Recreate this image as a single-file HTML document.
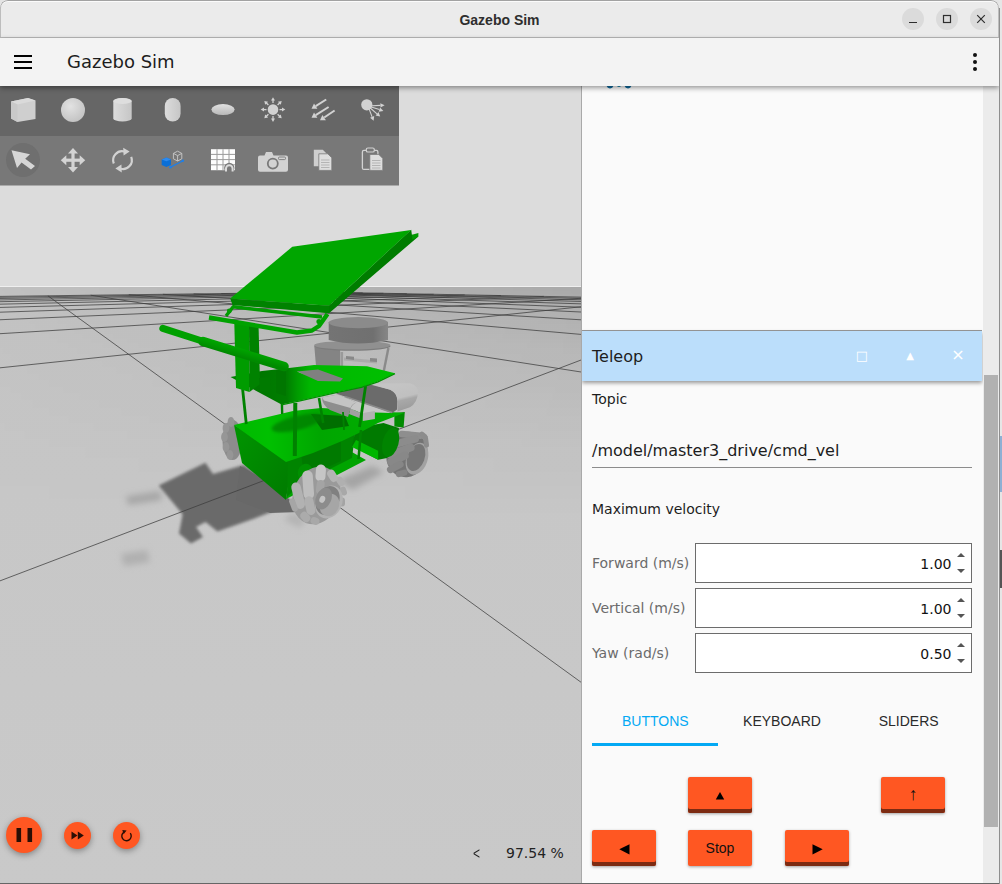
<!DOCTYPE html>
<html>
<head>
<meta charset="utf-8">
<title>Gazebo Sim</title>
<style>
html,body{margin:0;padding:0;}
body{width:1002px;height:884px;overflow:hidden;background:#e4e4e4;position:relative;font-family:"DejaVu Sans","Liberation Sans",sans-serif;color:#1d1d1d;}
.abs{position:absolute;}
#win{position:absolute;left:0;top:0;width:999px;height:884px;background:#fafafa;overflow:hidden;border-radius:8px 8px 0 0;}
#titlebar{position:absolute;left:0;top:0;width:999px;height:37px;background:#ebebeb;border-bottom:1px solid #b9b9b9;border-radius:8px 8px 0 0;box-shadow:inset 0 1px 0 #a2a2a2,inset 1px 0 0 #bdbdbd,inset -1px 0 0 #bdbdbd,inset 0 2px 0 #fbfbfb;}
#titlebar .t{position:absolute;left:0;width:999px;top:11.5px;text-align:center;font-family:"Liberation Sans","DejaVu Sans",sans-serif;font-weight:bold;font-size:14px;line-height:16px;color:#2e2e2e;}
.wb{position:absolute;top:8px;width:22px;height:22px;border-radius:11px;background:#dbdbdb;}
#header{position:absolute;left:0;top:38px;width:999px;height:48px;background:#f3f3f3;box-shadow:0 2px 5px rgba(0,0,0,.4);z-index:5;}
#header .ttl{position:absolute;left:67px;top:12px;font-size:18px;line-height:24px;color:#1d1d1d;white-space:nowrap;}
#view{position:absolute;left:0;top:86px;width:581px;height:797px;background:#c9c9c9;overflow:hidden;}
#split{position:absolute;left:581px;top:86px;width:1px;height:797px;background:#a9a9a9;}
#panel{position:absolute;left:582px;top:86px;width:401px;height:797px;background:#fafafa;overflow:hidden;}
#sbar{position:absolute;left:983px;top:86px;width:16px;height:797px;background:#ebebeb;}
#sbar .th{position:absolute;left:1px;top:289px;width:14px;height:452px;background:#b1b1b1;}

.lbl{font-size:14px;line-height:18px;color:#1d1d1d;white-space:nowrap;}
.lbl.g{color:#6b6b6b;}
.spin{left:113px;width:275px;height:38px;border:1px solid #6c6c6c;background:#fff;}
.spin span{position:absolute;right:19.5px;top:11px;font-size:14px;line-height:18px;color:#111;}
.spin i{position:absolute;left:261px;width:0;height:0;border-left:4px solid transparent;border-right:4px solid transparent;}
.spin i.u{top:9px;border-bottom:4.5px solid #555;}
.spin i.d{top:25px;border-top:4.5px solid #555;}
.tab{top:610px;width:126.67px;height:50px;text-align:center;font-family:"Liberation Sans","DejaVu Sans",sans-serif;font-size:14px;line-height:50px;color:#2a2a2a;white-space:nowrap;}
.btn{width:64px;height:36px;border-radius:2px;background:#ff5722;box-shadow:0 1px 3px rgba(0,0,0,.35);overflow:hidden;text-align:center;font-family:"Liberation Sans","DejaVu Sans",sans-serif;font-size:14px;line-height:36px;color:#111;}
.btn.k{box-shadow:inset 0 -4px 0 #7c2b12,0 1px 3px rgba(0,0,0,.35);}
.btn svg{display:block}
.fab{border-radius:50%;background:#ff5722;box-shadow:0 2px 6px rgba(0,0,0,.35);}
.fab svg{display:block}
</style>
</head>
<body>
<div id="rstrip" class="abs" style="left:999px;top:0;width:3px;height:884px;background:#e6e6e6"><div class="abs" style="left:0;top:8px;width:1px;height:876px;background:#8e8e8e"></div><div class="abs" style="left:1px;top:436px;width:2px;height:56px;background:#8fb0d4"></div><div class="abs" style="left:1px;top:550px;width:2px;height:38px;background:#555"></div></div>
<div id="win">
  <div id="titlebar">
    <div class="t">Gazebo Sim</div>
    <div class="wb" style="left:902px"><svg width="22" height="22" viewBox="0 0 22 22"><path d="M7 14.5h8" stroke="#2e2e2e" stroke-width="1.2" fill="none"/></svg></div>
    <div class="wb" style="left:936px"><svg width="22" height="22" viewBox="0 0 22 22"><rect x="7.5" y="7.5" width="7" height="7" stroke="#2e2e2e" stroke-width="1.2" fill="none"/></svg></div>
    <div class="wb" style="left:970px"><svg width="22" height="22" viewBox="0 0 22 22"><path d="M7.2 7.2l7.6 7.6M14.8 7.2l-7.6 7.6" stroke="#2e2e2e" stroke-width="1.2" fill="none"/></svg></div>
  </div>
  <div id="header">
    <svg class="abs" style="left:14px;top:17px" width="18" height="14" viewBox="0 0 18 14"><path d="M0 1h18M0 7h18M0 13h18" stroke="#000" stroke-width="2"/></svg>
    <div class="ttl">Gazebo Sim</div>
    <svg class="abs" style="left:971px;top:12px" width="8" height="24" viewBox="0 0 8 24"><circle cx="4" cy="5" r="2" fill="#111"/><circle cx="4" cy="12" r="2" fill="#111"/><circle cx="4" cy="19" r="2" fill="#111"/></svg>
  </div>
  <div id="view">
<!--SCENE--><svg class="abs" style="left:0;top:0" width="581" height="797" viewBox="0 86 581 797">
<defs><linearGradient id="gnd" x1="0" y1="0" x2="0" y2="1"><stop offset="0" stop-color="#c6c6c6"/><stop offset="1" stop-color="#c9c9c9"/></linearGradient><linearGradient id="dkv" gradientUnits="userSpaceOnUse" x1="0" y1="287" x2="0" y2="520"><stop offset="0" stop-color="#000" stop-opacity=".145"/><stop offset=".14" stop-color="#000" stop-opacity=".10"/><stop offset=".27" stop-color="#000" stop-opacity=".075"/><stop offset=".485" stop-color="#000" stop-opacity=".045"/><stop offset=".7" stop-color="#000" stop-opacity=".02"/><stop offset="1" stop-color="#000" stop-opacity="0"/></linearGradient><linearGradient id="mhg" gradientUnits="userSpaceOnUse" x1="0" y1="0" x2="581" y2="0"><stop offset="0" stop-color="#fff" stop-opacity=".18"/><stop offset="1" stop-color="#fff" stop-opacity="1"/></linearGradient><mask id="mh" maskUnits="userSpaceOnUse" x="0" y="86" width="581" height="800"><rect x="0" y="86" width="581" height="800" fill="url(#mhg)"/></mask><filter id="bl" x="-20%" y="-20%" width="140%" height="140%"><feGaussianBlur stdDeviation="3"/></filter><filter id="bl2" x="-20%" y="-20%" width="140%" height="140%"><feGaussianBlur stdDeviation="1.8"/></filter><filter id="bl3" x="-30%" y="-60%" width="160%" height="220%"><feGaussianBlur stdDeviation="3"/></filter>
<linearGradient id="gp1" gradientUnits="userSpaceOnUse" x1="234" y1="430" x2="404" y2="420"><stop offset="0" stop-color="#00b800"/><stop offset=".2" stop-color="#00c000"/><stop offset=".5" stop-color="#00a600"/><stop offset="1" stop-color="#00b000"/></linearGradient>
<linearGradient id="gp2" gradientUnits="userSpaceOnUse" x1="230" y1="380" x2="395" y2="380"><stop offset="0" stop-color="#008200"/><stop offset=".18" stop-color="#007600"/><stop offset=".345" stop-color="#007e00"/><stop offset=".41" stop-color="#009c00"/><stop offset=".49" stop-color="#00b800"/><stop offset="1" stop-color="#00c000"/></linearGradient>
<linearGradient id="gside" gradientUnits="userSpaceOnUse" x1="236" y1="440" x2="290" y2="480"><stop offset="0" stop-color="#009200"/><stop offset="1" stop-color="#007e00"/></linearGradient>
<linearGradient id="gl" x1="0" y1="0" x2="1" y2="0"><stop offset="0" stop-color="#747474"/><stop offset=".75" stop-color="#707070"/><stop offset=".9" stop-color="#7e7e7e"/><stop offset="1" stop-color="#868686"/></linearGradient>
<linearGradient id="gcap" gradientUnits="userSpaceOnUse" x1="402" y1="384" x2="408" y2="409"><stop offset="0" stop-color="#c4c4c4"/><stop offset=".5" stop-color="#c0c0c0"/><stop offset=".62" stop-color="#a8a8a8"/><stop offset="1" stop-color="#9c9c9c"/></linearGradient>
<linearGradient id="gb" gradientUnits="userSpaceOnUse" x1="240" y1="345" x2="237" y2="356"><stop offset="0" stop-color="#00ae00"/><stop offset="1" stop-color="#008a00"/></linearGradient></defs>
<rect x="0" y="86" width="581" height="200" fill="#dcdcdc"/>
<rect x="0" y="286" width="581" height="1" fill="#efefef"/>
<rect x="0" y="287" width="581" height="600" fill="url(#gnd)"/>
<rect x="0" y="287" width="581" height="240" fill="url(#dkv)" mask="url(#mh)"/>
<g filter="url(#bl3)">
<polygon points="126.0,496.5 160.0,491.0 162.0,500.0 128.0,505.0" fill="#a6a6a6" />
<polygon points="121.0,554.0 147.0,550.0 150.0,562.0 124.0,566.0" fill="#b0b0b0" />
<polygon points="338.0,480.0 372.0,466.0 384.0,472.0 352.0,490.0" fill="#a4a4a4" />
<polygon points="292.0,512.0 306.0,520.0 300.0,528.0 284.0,520.0" fill="#b4b4b4" />
</g>
<g filter="url(#bl2)">
<polygon points="158.7,485.5 205.4,462.8 213.0,474.0 243.7,465.0 262.0,478.0 290.0,500.0 289.0,505.0 253.0,519.0 217.4,531.5 205.5,522.0 196.0,527.0 203.0,537.0 191.0,543.5 179.0,533.4 182.6,514.3" fill="#6a6a6a" />
</g>
<polygon points="240.0,466.0 262.0,478.0 290.0,500.0 300.0,512.0 270.0,513.0 236.0,500.0" fill="#686868" />

<path d="M-44701.0 1205.7L-1174.9 311.4M-108188.7 2765.1L-894.1 307.8M-59369.8 1823.1L-684.0 305.1M-37438.2 1400.0L-520.9 303.0M-24977.5 1159.6L-390.6 301.4M-51260.3 2455.9L-284.1 300.0M-26282.5 1698.4L-195.5 298.9M-14233.7 1333.0L-120.6 297.9M-31795.4 3974.8L-56.4 297.1M-6957.6 2215.4L-0.8 296.4M1836.6 1592.4L47.9 295.8M6337.1 1273.6L90.7 295.2M34692.8 3329.6L128.8 294.7M28500.2 2022.8L162.9 294.3M26028.3 1501.2L193.6 293.9M24698.5 1220.6L221.3 293.6M81381.1 2876.5L246.5 293.2M57521.6 1865.2L269.5 292.9M47061.8 1421.9L290.6 292.7M41188.4 1173.0L310.0 292.4M115967.8 2540.8L327.9 292.2M101839.7 2503.4L6546.8 413.1M133675.0 3720.6L3022.4 344.6M40132.0 1523.7L1973.3 324.2M39213.1 1828.8L1469.6 314.4M37692.7 2333.6L1173.7 308.6M34692.8 3329.6L979.0 304.9M5808.9 1469.0L841.1 302.2M-3061.8 1744.6L738.4 300.2M-17326.0 2187.9L658.9 298.6M-44051.4 3018.5L595.6 297.4M-25605.5 1418.9L543.9 296.4M-40962.0 1669.2L500.9 295.6M-65035.4 2061.6L464.7 294.9M-108188.7 2765.1L433.7 294.3M-16454.8 625.3L406.8 293.7M-3931.7 368.0L383.4 293.3M-2219.5 332.8L362.7 292.9M-1539.7 318.9L344.3 292.5M-1174.9 311.4L327.9 292.2" stroke="#3c3c3c" stroke-width="1" stroke-opacity=".75" fill="none"/>

<ellipse cx="232.5" cy="440" rx="10" ry="20" fill="#8c8c8c" />
<ellipse cx="226" cy="428" rx="3.4" ry="5" fill="#969696" />
<ellipse cx="224.5" cy="437" rx="3.4" ry="5" fill="#969696" />
<ellipse cx="226" cy="447" rx="3.4" ry="5" fill="#969696" />
<ellipse cx="230" cy="455" rx="3.4" ry="5" fill="#969696" />
<ellipse cx="231" cy="422" rx="3.4" ry="5" fill="#969696" />
<ellipse cx="407" cy="454.5" rx="20.5" ry="23" fill="#747474" transform="rotate(20 407 454.5)" />
<ellipse cx="417" cy="458.8" rx="10.5" ry="16.5" fill="#a2a2a2" transform="rotate(20 417 458.8)" />
<ellipse cx="416" cy="457.5" rx="8.6" ry="14" fill="#767676" transform="rotate(20 416 457.5)" />
<rect x="407.9" y="422.3" width="6.5" height="25" rx="3.2" fill="#8e8e8e" transform="rotate(95 411.1 434.8)"/>
<rect x="401.1" y="427.1" width="7.5" height="29" rx="3.8" fill="#8c8c8c" transform="rotate(75 404.8 441.6)"/>
<rect x="396.7" y="436.6" width="8" height="29" rx="4.0" fill="#8a8a8a" transform="rotate(70 400.7 451.1)"/>
<rect x="394.0" y="447.3" width="8" height="23" rx="4.0" fill="#888" transform="rotate(65 398 458.8)"/>
<rect x="391.8" y="458.0" width="7" height="18" rx="3.5" fill="#868686" transform="rotate(62 395.3 467)"/>
<rect x="398.6" y="467.3" width="6" height="12" rx="3.0" fill="#848484" transform="rotate(75 401.6 473.3)"/>
<rect x="423.5" y="435.6" width="5" height="12" rx="2.5" fill="#8c8c8c" transform="rotate(-8 426 441.6)"/>
<rect x="421.0" y="431.0" width="5" height="9" rx="2.5" fill="#8c8c8c" transform="rotate(-50 423.5 435.5)"/>
<polygon points="286.0,499.0 291.0,465.0 343.0,447.0 366.0,460.0 337.0,475.0 300.0,492.0" fill="#00a400" />
<polygon points="234.0,425.0 242.0,463.0 286.0,500.0 292.0,460.0" fill="url(#gside)" />
<polygon points="288.0,456.0 355.0,434.0 352.0,458.0 300.0,484.0 287.0,497.0" fill="#008400" />
<polygon points="301.0,452.0 341.0,438.0 341.0,461.0 304.0,478.0" fill="#007a00" />
<ellipse cx="305" cy="472" rx="7" ry="8.5" fill="#009000" transform="rotate(20 305 472)" />
<polygon points="356.0,428.0 383.5,423.0 399.0,428.0 397.0,440.0 387.1,458.0 378.1,459.8 352.0,446.0" fill="#007a00" />
<ellipse cx="390.6" cy="442.5" rx="8" ry="15" fill="#008400" transform="rotate(15 390.6 442.5)" />
<polygon points="356.0,440.0 378.1,450.7 378.1,459.8 352.0,447.0" fill="#00b600" />
<polygon points="394.4,413.0 404.8,412.0 403.6,427.5 394.4,426.5" fill="#008a00" />
<polygon points="234.0,425.0 293.0,411.0 321.0,408.0 376.0,411.0 404.0,413.0 378.0,423.0 361.0,432.0 342.0,441.0 313.0,453.0 286.0,462.0" fill="url(#gp1)" />
<polygon points="311.0,414.0 345.0,416.0 349.0,426.0 322.0,430.0" fill="#006e00" />
<ellipse cx="297" cy="423" rx="26" ry="7" fill="#007c00" transform="rotate(-14 297 423)" opacity=".75" filter="url(#bl2)"/>
<polygon points="322.0,397.5 336.5,393.6 392.0,413.0 375.0,412.5 362.0,413.5 350.5,408.5" fill="#c6c6c6" />
<polygon points="350.5,408.5 362.0,413.5 362.0,419.0 349.0,414.0" fill="#a0a0a0" />
<path d="M322 397.5 L338 394.5 L356.5 402.5 Q352 404 350.5 409 L348 417 L330 410 Q322 405 322 397.5Z" fill="#8e8e8e"/>
<path d="M322 397.5 L338 394.5 L356.5 402.5 Q352 403.5 350.5 408 L324 400.5Z" fill="#c4c4c4"/>
<polygon points="362.8,413.0 374.9,411.0 374.9,419.0 362.8,421.0" fill="#b2b2b2" />
<path d="M336 393.6 L345 390.5 L368 384 L390.3 389.8 Q397.4 393 397.4 401 L397 409.5 L392.4 413 Z" fill="#6b6b6b"/>
<path d="M345 396.5 L392 412.6" stroke="#8a8a8a" stroke-width="1.6" fill="none"/>
<path d="M369 383.6 L410 383.2 Q418.5 385.5 417.9 393 Q417.5 402.5 410 407.3 L397.5 411.6 L397.4 401 Q397.4 393 390.3 389.8 Z" fill="url(#gcap)"/>
<polygon points="296.0,370.0 320.0,368.0 345.0,378.0 341.0,383.0 316.0,382.0" fill="#808080" />
<polygon points="314.4,347.0 340.1,350.0 340.1,368.0 316.0,366.0" fill="#848484" />
<line x1="341.8" y1="352" x2="341.8" y2="378" stroke="#9a9a9a" stroke-width="2.6" />
<line x1="388.4" y1="348" x2="383.8" y2="371" stroke="#8a8a8a" stroke-width="2.4" />
<polygon points="344.0,357.5 377.0,360.5 377.0,363.5 344.0,360.5" fill="#aaaaaa" />
<polygon points="346.0,356.0 354.0,356.8 354.0,360.0 346.0,359.0" fill="#888" />
<polygon points="370.0,358.0 377.0,358.6 377.0,362.0 370.0,361.4" fill="#888" />
<ellipse cx="352.3" cy="346.2" rx="38.2" ry="4.6" fill="#7c7c7c" />
<ellipse cx="352.3" cy="345.2" rx="38.2" ry="4.4" fill="#909090" />
<path d="M328.7 322 L328.7 340 Q357 347 388 340 L388 322 Z" fill="url(#gl)"/>
<ellipse cx="358.3" cy="322.6" rx="29.7" ry="5.6" fill="#8b8b8b" />
<line x1="242.6" y1="389" x2="246.3" y2="424" stroke="#008200" stroke-width="2.8" />
<line x1="295.3" y1="403" x2="294.8" y2="456" stroke="#008200" stroke-width="4" />
<line x1="281.9" y1="404" x2="282.2" y2="414" stroke="#008200" stroke-width="2.4" />
<line x1="319" y1="398" x2="323.2" y2="423" stroke="#008200" stroke-width="2.6" />
<line x1="365.6" y1="386" x2="359.5" y2="427" stroke="#008200" stroke-width="2.8" />
<line x1="361" y1="430" x2="358.5" y2="459" stroke="#008200" stroke-width="2.6" />
<line x1="343" y1="412" x2="344" y2="430" stroke="#008200" stroke-width="1.8" />
<polygon points="296.0,370.0 320.0,368.0 345.0,378.0 341.0,383.0 316.0,382.0" fill="#808080" />
<path d="M230.5 377 L262 371 L289 368 L314 365 L367 366.3 L395 373.3 L378 381.5 L361.5 387 L335 392.5 L300 400.5 L281.5 404.5 Z M297 371.5 L318 369.5 L343 378.5 L340 381.5 L318 381 Z" fill="url(#gp2)" fill-rule="evenodd"/>
<polyline points="281.5,404.8 300.0,400.9 335.0,392.9 361.5,387.4 378.0,381.9 395.0,373.6" fill="none" stroke="#009000" stroke-width="1.2" />
<polygon points="234.3,323.0 249.0,325.0 249.5,392.0 236.0,388.0" fill="#009c00" />
<polygon points="249.0,325.0 258.5,324.0 260.0,384.0 249.5,392.0" fill="#008200" />
<polygon points="259.0,378.0 270.0,377.0 270.5,390.0 260.0,392.0" fill="#007a00" />
<polygon points="276.0,370.0 286.0,371.0 286.0,396.0 276.0,393.0" fill="#007600" />
<line x1="162.8" y1="328.4" x2="202" y2="341" stroke="#00a000" stroke-width="7" stroke-linecap="round"/>
<line x1="203" y1="341.5" x2="284" y2="366.5" stroke="url(#gb)" stroke-width="9.5" stroke-linecap="round"/>
<polyline points="209.0,317.5 297.0,332.5 312.0,330.5 319.0,326.0 327.5,314.0" fill="none" stroke="#00a200" stroke-width="4.4" stroke-linejoin="round"/>
<polyline points="226.0,316.0 233.2,306.8 322.0,317.0" fill="none" stroke="#009a00" stroke-width="3.4" stroke-linejoin="round"/>
<ellipse cx="229.3" cy="311" rx="2.4" ry="2.4" fill="#00a000" />
<ellipse cx="319" cy="321.5" rx="2.6" ry="2.6" fill="#00a000" />
<polygon points="230.2,298.5 329.0,305.7 329.0,313.3 232.5,305.0" fill="#008200" />
<polygon points="411.2,229.7 411.9,234.8 418.4,236.4 329.0,313.3 329.0,305.7" fill="#007c00" />
<polygon points="411.9,234.8 418.4,233.0 418.4,236.4 412.5,239.8" fill="#009a00" />
<polygon points="292.3,246.8 411.2,229.9 329.0,305.7 230.2,298.5" fill="#00a600" />
<ellipse cx="316.5" cy="495.5" rx="23.5" ry="29.5" fill="#9a9a9a" transform="rotate(20 316.5 495.5)" />
<rect x="337.1" y="476.5" width="7" height="10" rx="3.5" fill="#b0b0b0" transform="rotate(-35 340.6 481.5)"/>
<rect x="340.5" y="486.5" width="6" height="9" rx="3.0" fill="#a8a8a8" transform="rotate(-20 343.5 491)"/>
<rect x="339.0" y="497.5" width="6" height="9" rx="3.0" fill="#a4a4a4" transform="rotate(0 342 502)"/>
<rect x="328.5" y="469.3" width="8" height="13" rx="4.0" fill="#b4b4b4" transform="rotate(-32 332.5 475.8)"/>
<rect x="315.7" y="464.6" width="10" height="17" rx="5.0" fill="#c6c6c6" transform="rotate(4 320.7 473.1)"/>
<rect x="316.3" y="480.0" width="8" height="14" rx="4.0" fill="#a4a4a4" transform="rotate(8 320.3 487)"/>
<rect x="302.9" y="470.4" width="10.5" height="29" rx="5.2" fill="#bebebe" transform="rotate(-4 308.1 484.9)"/>
<rect x="293.4" y="482.2" width="9.5" height="27" rx="4.8" fill="#b2b2b2" transform="rotate(-14 298.1 495.7)"/>
<rect x="305.4" y="496.2" width="9" height="19" rx="4.5" fill="#b0b0b0" transform="rotate(-12 309.9 505.7)"/>
<rect x="301.3" y="511.5" width="8" height="11" rx="4.0" fill="#ababab" transform="rotate(-40 305.3 517)"/>
<rect x="290.5" y="498.0" width="6" height="14" rx="3.0" fill="#a6a6a6" transform="rotate(-20 293.5 505)"/>
<rect x="311.5" y="516.5" width="7" height="9" rx="3.5" fill="#a8a8a8" transform="rotate(-70 315 521)"/>
<ellipse cx="328.9" cy="502" rx="13.2" ry="17" fill="#b2b2b2" transform="rotate(24 328.9 502)" />
<ellipse cx="327.6" cy="500.5" rx="11.4" ry="15" fill="#808080" transform="rotate(24 327.6 500.5)" />
<ellipse cx="329.5" cy="505" rx="9.5" ry="11.5" fill="#a6a6a6" transform="rotate(24 329.5 505)" />
<ellipse cx="323.6" cy="498.6" rx="7.6" ry="11.4" fill="#8c8c8c" transform="rotate(24 323.6 498.6)" />
<ellipse cx="322.3" cy="499.3" rx="2.8" ry="3.6" fill="#c4c4c4" transform="rotate(24 322.3 499.3)" />
</svg><svg class="abs" style="left:0;top:0" width="399" height="100" viewBox="0 86 399 100">
<defs><radialGradient id="sph" cx=".4" cy=".35" r=".7"><stop offset="0" stop-color="#e2e2e2"/><stop offset="1" stop-color="#c2c2c2"/></radialGradient><linearGradient id="cyl" x1="0" y1="0" x2="1" y2="0"><stop offset="0" stop-color="#dcdcdc"/><stop offset="1" stop-color="#c6c6c6"/></linearGradient><linearGradient id="elp" x1="0" y1="0" x2="0" y2="1"><stop offset="0" stop-color="#e0e0e0"/><stop offset="1" stop-color="#b8b8b8"/></linearGradient></defs>
<rect x="0" y="86" width="399" height="50" fill="#666"/><rect x="0" y="136" width="399" height="49.5" fill="#787878"/>
<polygon points="11,101.5 28,98 35.5,100.5 35.5,119 17.5,122 11,118.5" fill="#cfcfcf"/><polygon points="11,101.5 28,98 35.5,100.5 17.5,104.5" fill="#dadada"/><polygon points="11,101.5 17.5,104.5 17.5,122 11,118.5" fill="#c9c9c9"/>
<circle cx="73" cy="110" r="12" fill="url(#sph)"/>
<path d="M113.3 101 A9.2 3 0 0 1 131.7 101 L131.7 118.5 A9.2 3 0 0 1 113.3 118.5Z" fill="url(#cyl)"/><ellipse cx="122.5" cy="101" rx="9.2" ry="3" fill="#dedede"/>
<rect x="164.8" y="98" width="15.8" height="23.5" rx="7.9" fill="url(#cyl)"/>
<ellipse cx="223" cy="109.6" rx="11.6" ry="5.5" fill="url(#elp)"/>
<g stroke="#d2d2d2" stroke-width="1.3" fill="#d2d2d2"><circle cx="273" cy="109.6" r="5.3" stroke="none"/>
<line x1="279.5" y1="109.6" x2="283.0" y2="109.6"/>
<polygon stroke="none" points="285.3,109.6 282.0,111.6 282.0,107.6"/>
<line x1="277.6" y1="114.2" x2="280.1" y2="116.7"/>
<polygon stroke="none" points="281.7,118.3 277.9,117.4 280.8,114.5"/>
<line x1="273.0" y1="116.1" x2="273.0" y2="119.6"/>
<polygon stroke="none" points="273.0,121.9 271.0,118.6 275.0,118.6"/>
<line x1="268.4" y1="114.2" x2="265.9" y2="116.7"/>
<polygon stroke="none" points="264.3,118.3 265.2,114.5 268.1,117.4"/>
<line x1="266.5" y1="109.6" x2="263.0" y2="109.6"/>
<polygon stroke="none" points="260.7,109.6 264.0,107.6 264.0,111.6"/>
<line x1="268.4" y1="105.0" x2="265.9" y2="102.5"/>
<polygon stroke="none" points="264.3,100.9 268.1,101.8 265.2,104.7"/>
<line x1="273.0" y1="103.1" x2="273.0" y2="99.6"/>
<polygon stroke="none" points="273.0,97.3 275.0,100.6 271.0,100.6"/>
<line x1="277.6" y1="105.0" x2="280.1" y2="102.5"/>
<polygon stroke="none" points="281.7,100.9 280.8,104.7 277.9,101.8"/>
</g>
<line x1="326.2" y1="99.5" x2="315.7" y2="106.1" stroke="#d2d2d2" stroke-width="2"/><polygon fill="#d2d2d2" points="311.5,108.8 314.0,103.4 317.4,108.8"/>
<line x1="328.6" y1="107.0" x2="315.7" y2="115.1" stroke="#d2d2d2" stroke-width="2"/><polygon fill="#d2d2d2" points="311.5,117.8 314.0,112.4 317.4,117.8"/>
<line x1="334.6" y1="110.5" x2="324.2" y2="117.5" stroke="#d2d2d2" stroke-width="2"/><polygon fill="#d2d2d2" points="320.0,120.3 322.4,114.9 325.9,120.2"/>
<circle cx="366.8" cy="104.8" r="5.6" fill="#d2d2d2"/>
<line x1="368.0" y1="106.0" x2="380.4" y2="105.4" stroke="#d2d2d2" stroke-width="1.1"/><polygon fill="#d2d2d2" points="384.6,105.2 380.5,107.6 380.3,103.2"/>
<line x1="368.0" y1="106.0" x2="379.4" y2="109.6" stroke="#d2d2d2" stroke-width="1.1"/><polygon fill="#d2d2d2" points="383.4,110.9 378.7,111.7 380.1,107.5"/>
<line x1="368.0" y1="106.0" x2="377.0" y2="113.8" stroke="#d2d2d2" stroke-width="1.1"/><polygon fill="#d2d2d2" points="380.2,116.5 375.6,115.4 378.5,112.1"/>
<line x1="368.0" y1="106.0" x2="372.1" y2="116.9" stroke="#d2d2d2" stroke-width="1.1"/><polygon fill="#d2d2d2" points="373.6,120.8 370.1,117.7 374.2,116.1"/>
<circle cx="23" cy="160" r="17" fill="#6f6f6f"/>
<polygon points="11.5,150.2 30,154.3 25.2,158.8 35,166 31,169.4 21.6,162.4 17,168" fill="#d6d6d6"/>
<g fill="#d4d4d4"><rect x="71.4" y="151" width="3.2" height="18.5"/><rect x="63.5" y="158.6" width="19" height="3.2"/><polygon points="73,148 78,153.5 68,153.5"/><polygon points="73,172.4 78,167 68,167"/><polygon points="60.8,160.2 66.3,155.2 66.3,165.2"/><polygon points="85.2,160.2 79.7,155.2 79.7,165.2"/></g>
<g fill="none" stroke="#d2d2d2" stroke-width="2.2"><path d="M113.8 163.5 A9 9 0 0 1 124.5 151.5"/><path d="M131.2 156.8 A9 9 0 0 1 120.5 168.8"/></g><polygon fill="#d2d2d2" points="123.2,147.8 129.6,151.6 123.6,155.6"/><polygon fill="#d2d2d2" points="121.8,172.4 115.4,168.6 121.4,164.6"/>
<polygon points="161.7,159.5 166.5,157.6 171,159.4 171,165 166.3,167 161.7,165" fill="#0b6fd6"/><polygon points="161.7,159.5 166.5,157.6 171,159.4 166.3,161.3" fill="#2b8af0"/>
<g fill="none" stroke="#c9c9c9" stroke-width=".9"><polygon points="173.4,153.4 177.6,151.2 181.8,153.4 181.8,158.8 177.6,161 173.4,158.8"/><path d="M173.4 153.4L177.6 155.6L181.8 153.4M177.6 155.6V161"/></g>
<path d="M170.5 167.2L182.6 161" stroke="#1e7fe8" stroke-width="1.4"/><circle cx="170.5" cy="167.3" r="1.3" fill="#1e7fe8"/><circle cx="182.8" cy="160.8" r="1.3" fill="#1e7fe8"/>
<rect x="211" y="149.2" width="24" height="21" fill="#fdfdfd"/><path d="M211 154.4h24M211 159.6h24M211 164.8h24M217 149.2v21M223 149.2v21M229 149.2v21" stroke="#9a9a9a" stroke-width="1"/>
<circle cx="229.3" cy="168" r="5.2" fill="#787878"/><path d="M226 171.5v-3a3.3 3.3 0 0 1 6.6 0v3" fill="none" stroke="#dcdcdc" stroke-width="2"/>
<path d="M259.5 155.5h5l1.5-3.5h6l1.5 3.5h12.5q2 0 2 2v12.3q0 2-2 2h-26q-2 0-2-2v-12.3q0-2 2-2z" fill="#d2d2d2"/><circle cx="272.8" cy="163.6" r="5" fill="#d2d2d2" stroke="#787878" stroke-width="1.8"/><rect x="278.5" y="157" width="7" height="2.6" rx="1" fill="#d2d2d2" stroke="#787878" stroke-width=".9"/>
<path d="M313.8 149.8h9l4 4v12.5h-13z" fill="#cfcfcf"/><path d="M318.8 153.8h9l4 4v12.6h-13z" fill="#dedede" stroke="#787878" stroke-width=".8"/><path d="M321 160h8.5M321 162.5h8.5M321 165h8.5M321 167.5h8.5" stroke="#aaa" stroke-width=".8"/>
<rect x="362.4" y="150.4" width="15.5" height="19" rx="1.5" fill="none" stroke="#d2d2d2" stroke-width="1.3"/><rect x="366.3" y="148" width="8" height="4" rx="1.6" fill="#787878" stroke="#d2d2d2" stroke-width="1.2"/><path d="M369.8 154.4h9l4 4v12h-13z" fill="#dedede" stroke="#787878" stroke-width=".8"/><path d="M372 160.5h8.5M372 163h8.5M372 165.5h8.5M372 168h8.5" stroke="#aaa" stroke-width=".8"/>
</svg>
<div class="abs fab" style="left:6px;top:731px;width:36px;height:36px"><svg width="36" height="36"><rect x="10.5" y="11" width="4.6" height="14" fill="#2a0e05"/><rect x="21.5" y="11" width="4.6" height="14" fill="#2a0e05"/></svg></div>
<div class="abs fab" style="left:63.7px;top:735.5px;width:27px;height:27px"><svg width="27" height="27"><polygon points="7.5,9.5 13.5,13.5 7.5,17.5" fill="#2a0e05"/><polygon points="13.8,9.5 19.8,13.5 13.8,17.5" fill="#2a0e05"/></svg></div>
<div class="abs fab" style="left:112.8px;top:736px;width:27px;height:27px"><svg width="27" height="27"><path d="M17.3 11.2A4.7 4.7 0 1 1 11 10" fill="none" stroke="#2a0e05" stroke-width="1.4"/><polygon points="9.3,8 13.6,8.6 10.6,12.2" fill="#2a0e05"/></svg></div>
<div class="abs" style="left:473.4px;top:757.6px;font-family:'Liberation Sans',sans-serif;font-size:16px;line-height:20px;color:#222;transform:scaleX(.75);transform-origin:0 0">&lt;</div>
<div class="abs" style="left:506px;top:758px;font-size:14px;line-height:18px;color:#222;white-space:nowrap">97.54 %</div><!--/SCENE-->
  </div>
  <div id="split"></div>
  <div id="panel">

    <svg class="abs" style="left:22px;top:0" width="30" height="4" viewBox="0 0 30 4"><circle cx="6" cy="-1" r="3.4" fill="#0e6a9e"/><circle cx="24" cy="-1" r="3.4" fill="#0e6a9e"/><rect x="13.5" y="0" width="3" height="1" fill="#2b8fb5"/></svg>
    <div class="abs" style="left:0;top:244px;width:400px;height:1px;background:#9a9a9a"></div>
    <div class="abs" id="thead" style="left:0;top:245px;width:400px;height:50px;background:#bbdefb;box-shadow:0 2px 4px rgba(0,0,0,.4);">
      <div class="abs" style="left:10px;top:16px;font-size:16px;line-height:20px;color:#1d1d1d">Teleop</div>
      <div class="abs" style="left:270px;top:15px;width:20px;height:20px;color:#fff;font-size:13px;line-height:20px;text-align:center">&#9633;</div>
      <div class="abs" style="left:318px;top:15px;width:20px;height:20px;color:#fff;font-size:10px;line-height:20px;text-align:center">&#9650;</div>
      <div class="abs" style="left:366px;top:14px;width:20px;height:20px;color:#fff;font-size:16px;line-height:20px;text-align:center">&#215;</div>
    </div>
    <div class="abs lbl" style="left:10px;top:304px;">Topic</div>
    <div class="abs" style="left:10px;top:355px;font-size:16px;line-height:20px;color:#1d1d1d;white-space:nowrap">/model/master3_drive/cmd_vel</div>
    <div class="abs" style="left:10px;top:381px;width:380px;height:1px;background:#8c8c8c"></div>
    <div class="abs lbl" style="left:10px;top:414px;">Maximum velocity</div>
    <div class="abs lbl g" style="left:10px;top:468px;">Forward (m/s)</div>
    <div class="abs lbl g" style="left:10px;top:513px;">Vertical (m/s)</div>
    <div class="abs lbl g" style="left:10px;top:558px;">Yaw (rad/s)</div>
    <div class="abs spin" style="top:457px"><span>1.00</span><i class="u"></i><i class="d"></i></div>
    <div class="abs spin" style="top:502px"><span>1.00</span><i class="u"></i><i class="d"></i></div>
    <div class="abs spin" style="top:547px"><span>0.50</span><i class="u"></i><i class="d"></i></div>
    <div class="abs tab" style="left:10px;color:#03a9f4">BUTTONS</div>
    <div class="abs tab" style="left:136.67px">KEYBOARD</div>
    <div class="abs tab" style="left:263.33px">SLIDERS</div>
    <div class="abs" style="left:10px;top:657px;width:126px;height:3px;background:#03a9f4"></div>
    <div class="abs btn k" style="left:106px;top:691px"><svg width="64" height="36"><path d="M32 15l4.2 7.6h-8.4z" fill="#000"/></svg></div>
    <div class="abs btn k" style="left:299px;top:691px"><span style="font-size:17.5px;line-height:31px">&#8593;</span></div>
    <div class="abs btn k" style="left:10px;top:744px"><svg width="64" height="36"><path d="M27.3 19.3l10.2-5.1v10.2z" fill="#000"/></svg></div>
    <div class="abs btn" style="left:106px;top:744px"><span>Stop</span></div>
    <div class="abs btn k" style="left:203px;top:744px"><svg width="64" height="36"><path d="M37.7 19.3l-10.2-5.1v10.2z" fill="#000"/></svg></div>
  <!--PANEL-->
  </div>
  <div id="sbar"><div class="th"></div></div>
  <div id="botline" class="abs" style="left:0;top:882.5px;width:999px;height:1px;background:#666;z-index:9"></div>
</div>
</body>
</html>
